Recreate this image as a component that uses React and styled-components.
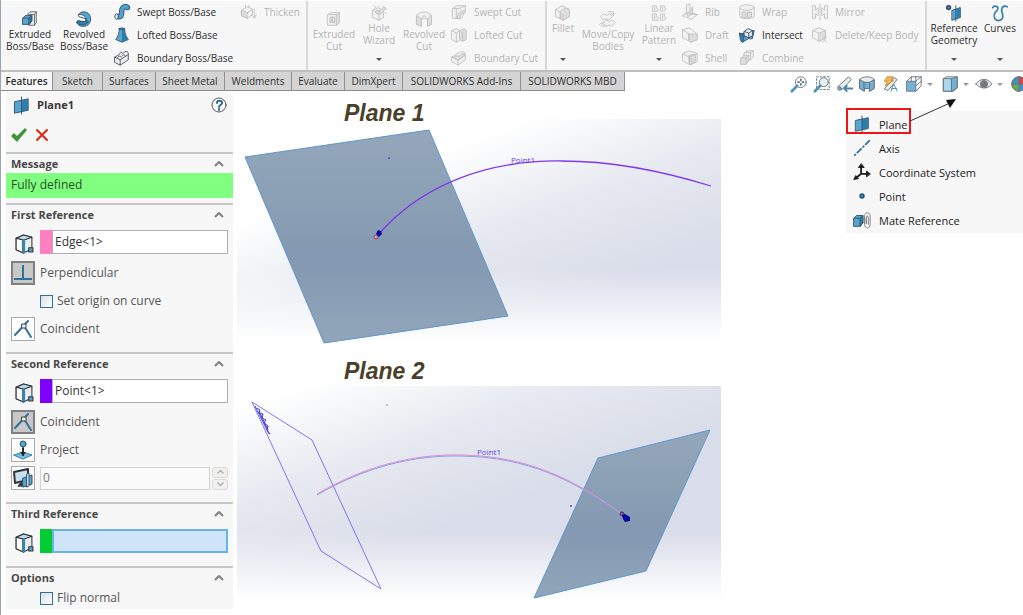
import React from 'react';
import styled, { createGlobalStyle, css } from 'styled-components';

const GlobalStyle = createGlobalStyle`
	* {
		box-sizing: border-box;
	}
	body {
		margin: 0;
		background: #fff;
		color: #2c2c2c;
		font-family: "Open Sans", "Noto Sans", sans-serif;
		font-size: 12px;
	}
	button, input {
		font: inherit;
		color: inherit;
	}
`;

const Page = styled.div`
	min-height: 100vh;
	border-left: 1px solid #9aa3b2;
	overflow: hidden;
`;

/* ---------- icons ---------- */

const Glyph = styled.svg`
	display: block;
	flex: none;
	width: ${p => p.$w || 18}px;
	height: ${p => p.$h || 18}px;
	fill: none;
	stroke: var(--line, #34506a);
	stroke-width: 1;
	stroke-linejoin: round;
	stroke-linecap: round;
	.f { fill: var(--fill, #55a5d0); }
	.d { fill: var(--dark, #2f7eaa); }
	.l { fill: var(--light, #e9edf0); }
`;

const shapes = {
	extrude: <>
		<path className="l" stroke="#666" d="M7 3l2-2h7v12l-2 3H8z" />
		<path className="l" stroke="#666" d="M14 4v12M14 4l2-3M8 4h6" />
		<path className="f" d="M1 8l3-3h7v6l-3 4H1z" />
		<path className="d" d="M8 8l3-3v6l-3 4z" />
		<path d="M1 8h7" />
	</>,
	revolve: <>
		<path className="f" d="M3 4C5 0 12 0 15 4c3 5 1 12-5 13-4 1-8-1-9-4l1-2 6 1c3 0 4-2 2-4z" />
		<path className="l" d="M3 4c3-1 7 1 9 5L5 7C3 7 2 5 3 4z" />
		<path className="d" d="M1 13l1-2 6 1c2 0 3-1 3-2l3 2c-2 4-10 5-13 1z" />
	</>,
	sweep: <>
		<path strokeWidth="6" d="M4 14c6 2 4-4 5-8 1-3 4-4 6-2" />
		<path style={{ stroke: 'var(--fill, #4fa3d0)' }} strokeWidth="4" d="M4 14c6 2 4-4 5-8 1-3 4-4 6-2" />
		<ellipse className="l" cx="3" cy="14" rx="2" ry="3" />
	</>,
	loft: <>
		<path className="f" d="M6 2l6 0c0 5 1 8 4 12l-7 3-7-3c3-4 4-7 4-12z" />
		<path className="d" stroke="none" d="M9 3l3-1c0 5 1 8 4 12l-7 3z" />
		<path className="f" d="M6 2l3-1 3 1-3 1z" />
	</>,
	boundary: <g stroke="#555">
		<path className="l" d="M1 8l5-3c1-3 3-3 4-1l2-2c2-1 4 0 4 2v7l-9 6-6-3z" />
		<path d="M1 8l6 3v6M7 11l9-6M4 9c0-2 3-3 4-1M9 7c1-2 3-2 4 0" />
	</g>,
	thicken: <>
		<path className="l" d="M1 7l6-4 6 3v6l-6 4-6-3z" />
		<path className="f" d="M1 7l6 3v6l-6-3z" />
		<path d="M7 10l6-4M15 6v9M12 12l3 4 2-4M5 4V1M9 4V2" />
	</>,
	cut: <>
		<path className="l" d="M2 4l3-2h10v11l-3 3H2z" />
		<path className="f" d="M12 4l3-2v11l-3 3z" />
		<path d="M2 4h10" /><path className="f" d="M5 7h5v6H5z" /><path d="M7 7v4H5M7 11l3 2" />
	</>,
	hole: <>
		<path className="l" d="M2 6l6-3 6 4v7l-5 3-7-3z" />
		<path d="M2 6l7 4v7M9 10l5-3" /><ellipse className="f" cx="8" cy="8" rx="3" ry="2" />
		<path className="f" d="M8 9l6-7 3 2-6 6zM4 1l1 2M16 8l1 2M9 1v1" />
	</>,
	revcut: <>
		<path className="l" d="M1 5c2-5 14-5 16 0v10l-4 2v-7c-1-2-6-2-7 0v7l-5-2z" />
		<path className="f" d="M1 5l5 4v8l-5-2zM17 5l-4 4v8l4-2z" /><path d="M6 9l3-4 4 4" />
	</>,
	sweepcut: <>
		<path className="l" d="M2 5l4-3h10v4l-4 10H2z" /><path d="M2 5h8l6-3M6 5v11" />
		<path className="f" d="M7 16c0-5 3-8 9-9v3c-4 0-6 2-6 6z" />
	</>,
	loftcut: <>
		<path className="l" d="M1 4l5-2 4 2v11l-4 2-5-3z" /><path className="f" d="M10 4l5-2 2 2v10l-4 2-3-2z" />
		<path d="M1 4l5 3v10M6 7l4-3M13 6v10" />
	</>,
	boundcut: <>
		<path className="l" d="M1 8l8-5c3-2 7-1 7 2v6l-8 6-7-4z" />
		<path className="f" d="M3 8c3-3 5 0 7-2 2-2 4-2 6-1l-8 6z" /><path d="M1 8l7 4v5M8 12l8-6" />
	</>,
	fillet: <>
		<path className="l" d="M1 5l7-4 8 4v8l-7 4-8-4z" /><path className="f" d="M6 8c1-3 5-5 10-3v8l-7 4-3-2z" />
		<path d="M1 5l5 3v7M9 11v6" />
	</>,
	move: <>
		<path className="l" d="M1 6l3-3 4 2 3-2 3 3-4 4-4-1-2 1z" />
		<path className="l" d="M4 13l3-3 4 2 3-2 3 3-4 4-4-1-2 1z" />
		<path d="M9 1h6v4M13 3l2 2 2-2M7 17H2v-4M0 15l2-2 2 2" />
	</>,
	pattern: <>
		<path className="l" d="M2 1h4v3l2 1v2H2zM11 1h4v2l2 1-2 3h-4zM2 10h4v3l2 1v3H2zM11 10h4v3l2 1-2 3h-4z" />
		<path className="f" d="M4 3v2M13 3v2M4 12v3M13 12v3" />
	</>,
	rib: <>
		<path className="l" d="M1 13l4-3V1l4-1v9l8 3-6 5z" /><path className="f" d="M5 10l4-1 3-6v8l-5 3z" /><path d="M1 13l4-3 12 2" />
	</>,
	draft: <>
		<path className="l" d="M1 3l8-2 8 7v6l-7 3-9-5z" /><path className="f" d="M8 8l9 0v6l-7 3-2-2z" /><path d="M1 3l7 5v7" />
	</>,
	shell: <>
		<path className="l" d="M1 4l7-3 9 3v9l-8 4-8-5z" /><path className="f" d="M8 6l7-1v8l-6 3z" /><path d="M1 4l7 4v8M8 8l9-4M10 9v4l4 1" />
	</>,
	wrap: <>
		<path className="l" d="M1 4v10c2 3 14 3 16 0V4z" /><ellipse className="l" cx="9" cy="4" rx="8" ry="3" />
		<path className="f" d="M4 9h4v6H4zM10 9h4v6h-4z" />
	</>,
	intersect: <>
		<path className="f" d="M1 7c4 2 5-2 8-1l8-2-2 9c-3 1-4-1-6 1l-5 3z" />
		<path className="l" d="M6 5l4-3 5 2v6l-4 2-5-2z" /><path d="M6 5l5 2v5M11 7l4-3" /><path className="d" d="M1 7l5 2-1 5-1 3-2-2z" />
	</>,
	combine: <>
		<path className="l" d="M6 3l3-2h7v7l-3 3H6z" /><path className="f" d="M2 9l3-3h6v6l-3 4H2z" /><path d="M2 9h6v7M8 9l3-3M6 3h7v8M13 3l3-2" />
	</>,
	mirror: <>
		<path className="l" d="M1 2h3v5l3-3v9L4 11v5H1zM17 2h-3v5l-3-3v9l3-2v5h3z" /><path d="M9 0v18" strokeDasharray="3 1" />
	</>,
	del: <>
		<path className="l" d="M1 4l7-3 7 3v8l-7 4-7-4z" /><path className="f" d="M8 7l7-3v8l-7 4z" /><path d="M1 4l7 3M12 12l4 5M16 12l-4 5" />
	</>,
	refgeo: <>
		<circle className="f" cx="3" cy="3" r="2" strokeWidth="2" />
		<path className="f" d="M7 6l9-3v11l-9 3z" /><path className="d" d="M12 4l4-1v11l-4 1z" stroke="none" /><path d="M11 1v17" strokeDasharray="3 1" />
	</>,
	curves: <path style={{ stroke: '#3c82ad' }} strokeWidth="2" d="M1 3c1-2 3-2 5-1 2 2 0 4-2 6-2 3-2 7 1 9 3 1 6 0 7-3 1-4-2-6-1-10 1-3 4-3 6-2" />,
	plane: <>
		<path className="f" d="M2 5l14-3v12L2 17z" /><path className="d" d="M9 4l7-2v12l-7 1z" stroke="none" /><path d="M9 0v18" strokeDasharray="4 1" />
	</>,
	axis: <path style={{ stroke: '#2b759f' }} strokeWidth="2" strokeDasharray="1 3 6 3" d="M1 17L17 1" />,
	coord: <>
		<path stroke="#1d1d1d" strokeWidth="2" d="M8 11V3M8 11h7M8 11l-6 5" />
		<path fill="#1d1d1d" stroke="#1d1d1d" d="M8 0L5 4h6zM18 11l-4-3v6zM0 17l2-4 3 3z" />
	</>,
	point: <circle className="f" cx="9" cy="9" r="2" strokeWidth="2" stroke="#23567a" />,
	mate: <>
		<path className="f" d="M0 7l3-3h7v8l-3 4H0z" /><path className="d" d="M7 7l3-3v8l-3 4z" /><path d="M0 7h7" />
		<path stroke="#777" d="M12 13V4c0-4 6-4 6 0v10c0 5-6 5-6 0V6M14 13V6c0-2 2-2 2 0v8" />
	</>,
	face: <g stroke="#333">
		<path className="l" d="M2 4l7-3 8 2v11l-8 4-7-3z" />
		<path fill="#b7dcf0" d="M2 4l7-3 8 2-8 3z" />
		<path fill="#fff" d="M2 4l7 2v12l-7-3z" /><path d="M9 7v10" strokeWidth="3" stroke="#3a82aa" />
		<path className="f" d="M14 13h4v4h-4z" />
	</g>,
	perp: <path stroke="#2f719b" strokeWidth="2" strokeLinecap="butt" d="M9 1v14M0 15h18" />,
	coin: <>
		<path stroke="#2f719b" strokeWidth="2" d="M1 15L14 1M10 6l7 11" /><path className="l" stroke="#444" d="M8 4h4v4H8z" />
	</>,
	project: <>
		<path d="M0 14l9-3 9 3-9 4z" fill="#79bbdd" stroke="#3a82aa" /><path stroke="#222" strokeWidth="2" strokeDasharray="2 1" d="M9 7v7" />
		<path fill="#222" stroke="none" d="M6 11h6l-3 4z" /><circle className="f" cx="9" cy="3" r="3" />
	</>,
	monitor: <>
		<path stroke="#333" d="M0 3l14-3v11L1 14z" fill="#c5e2f2" strokeWidth="2" /><path fill="#333" d="M4 17l3-4 4 4z" />
		<path className="f" d="M9 9l9-3v9l-9 3z" /><path className="l" d="M13 5l2-1v13l-2 1z" />
	</>,
};

const Icon = ({ name, w, h }) => (
	<Glyph viewBox="-1 -1 20 20" $w={w} $h={h} aria-hidden="true">{shapes[name]}</Glyph>
);

/* ---------- ribbon ---------- */

const Ribbon = styled.header`
	display: flex;
	height: 72px;
	background: #f7f7f7;
	border-top: 1px solid #fff;
	border-bottom: 2px solid #bfbfbf;
	font-size: 10px;
	line-height: 12px;
	overflow: hidden;
`;

const Group = styled.div`
	display: flex;
	flex: none;
	width: ${p => p.$w}px;
	border-right: 2px solid #d8d8d8;
	&:last-child {
		flex: 1 0 auto;
		border: 0;
	}
`;

const disabledLook = css`
	color: #b4b4b4;
	--line: #c2c2c2;
	--fill: #dedede;
	--dark: #cfcfcf;
	--light: #f1f1f1;
`;

const plainButton = css`
	border: 0;
	padding: 0;
	background: none;
	${p => p.disabled && disabledLook}
`;

const BigTool = styled.button`
	${plainButton}
	display: flex;
	flex-direction: column;
	align-items: center;
	flex: none;
	width: ${p => p.$w}px;
	height: 63px;
	padding-top: ${p => p.$low ? 9 : 3}px;
	white-space: pre;
`;

const Caret = styled.span`
	width: 0;
	height: 0;
	margin: ${p => p.$flat ? '0' : 'auto 0 3px'};
	border: 3px solid transparent;
	border-top-color: ${p => p.$flat ? '#999' : '#555'};
	border-bottom: 0;
	flex: none;
`;

const ToolList = styled.div`
	display: grid;
	grid-auto-rows: 23px;
	align-content: start;
	flex: none;
	width: ${p => p.$w}px;
	margin-left: ${p => p.$gap || 0}px;
`;

const SmallTool = styled.button`
	${plainButton}
	display: flex;
	align-items: center;
	gap: 6px;
	height: 22px;
	white-space: nowrap;
`;

const Big = ({ icon, label, w, low, caret, off }) => (
	<BigTool $w={w} $low={low} disabled={off}>
		<Icon name={icon} />
		<span>{label}</span>
		{caret && <Caret />}
	</BigTool>
);

const List = ({ items, w, gap }) => (
	<ToolList $w={w} $gap={gap}>
		{items.map(([icon, label, on]) => (
			<SmallTool key={label} disabled={!on}>
				<Icon name={icon} />
				{label}
			</SmallTool>
		))}
	</ToolList>
);

const RibbonBar = () => (
	<Ribbon>
		<Group $w={307}>
			<Big icon="extrude" label={'Extruded\nBoss/Base'} w={58} low />
			<Big icon="revolve" label={'Revolved\nBoss/Base'} w={50} low />
			<List w={127} gap={4} items={[
				['sweep', 'Swept Boss/Base', true],
				['loft', 'Lofted Boss/Base', true],
				['boundary', 'Boundary Boss/Base', true],
			]} />
			<List w={64} items={[['thicken', 'Thicken']]} />
		</Group>
		<Group $w={239}>
			<Big icon="cut" label={'Extruded\nCut'} w={52} low off />
			<Big icon="hole" label={'Hole\nWizard'} w={38} caret off />
			<Big icon="revcut" label={'Revolved\nCut'} w={52} low off />
			<List w={92} items={[
				['sweepcut', 'Swept Cut'],
				['loftcut', 'Lofted Cut'],
				['boundcut', 'Boundary Cut'],
			]} />
		</Group>
		<Group $w={380}>
			<Big icon="fillet" label="Fillet" w={32} caret off />
			<Big icon="move" label={'Move/Copy\nBodies'} w={58} low off />
			<Big icon="pattern" label={'Linear\nPattern'} w={44} caret off />
			<List w={57} items={[['rib', 'Rib'], ['draft', 'Draft'], ['shell', 'Shell']]} />
			<List w={73} items={[['wrap', 'Wrap'], ['intersect', 'Intersect', true], ['combine', 'Combine']]} />
			<List w={108} items={[['mirror', 'Mirror'], ['del', 'Delete/Keep Body']]} />
		</Group>
		<Group>
			<Big icon="refgeo" label={'Reference\nGeometry'} w={54} caret />
			<Big icon="curves" label="Curves" w={38} caret />
		</Group>
	</Ribbon>
);

/* ---------- tabs and view toolbar ---------- */

const TabRow = styled.div`
	display: flex;
	justify-content: space-between;
	height: 19px;
`;

const Tabs = styled.div`
	display: flex;
	flex: none;
	border-bottom: 1px solid #8c8c8c;
	font-size: 10px;
`;

const Tab = styled.button`
	width: ${p => p.$w}px;
	padding: 0;
	border: 0;
	border-right: 1px solid #909090;
	background: ${p => p.$active ? '#f7f7f7' : '#d4d4d4'};
	color: #303030;
	font-weight: ${p => p.$active ? 600 : 400};
	line-height: 18px;
	white-space: nowrap;
`;

const tabs = [
	['Features', 52], ['Sketch', 50], ['Surfaces', 53], ['Sheet Metal', 69], ['Weldments', 67],
	['Evaluate', 53], ['DimXpert', 58], ['SOLIDWORKS Add-Ins', 118], ['SOLIDWORKS MBD', 104],
];

const ViewTools = styled.div`
	display: flex;
	align-items: center;
	flex: none;
	height: 24px;
`;

const ViewButton = styled.button`
	${plainButton}
	display: flex;
	align-items: center;
	gap: 4px;
	flex: none;
	width: ${p => p.$w}px;
	--line: #64717c;
	--fill: #73b1d5;
`;

const viewTools = [
	['Zoom to fit', 23, <>
		<circle cx="11" cy="7" r="6" fill="#fff" /><path d="M7 11l-6 6" strokeWidth="3" stroke="#5490b5" />
		<path d="M11 4v1M11 9v1M8 7h1M13 7h1" strokeWidth="2" />
	</>],
	['Zoom to area', 23, <>
		<path d="M3 1h14v14H3z" strokeDasharray="2 2" /><circle cx="11" cy="7" r="5" fill="#e6f0f6" /><path d="M7 11l-6 6" strokeWidth="3" stroke="#5490b5" />
	</>],
	['Previous view', 22, <>
		<path className="l" d="M1 12L13 1l3 3L6 15z" /><circle className="f" cx="3" cy="14" r="2" /><path d="M8 14h9M11 11l-3 3 3 3" stroke="#4784aa" strokeWidth="2" />
	</>],
	['Section view', 23, <>
		<path className="l" d="M1 4c3-4 13-4 16 0v10l-5 3V8H6v9l-5-3z" />
		<path className="f" d="M1 4l5 3v10l-5-3zM12 7l5-3v10l-5 3z" /><path className="f" d="M6 7h6v7H6z" />
	</>],
	['Annotation views', 24, <>
		<path d="M3 14L14 2l3 2L7 16z" className="l" /><path d="M6 1h7l-3 4h3l-9 6 2-5H3z" fill="#f5b750" stroke="#c48d37" />
		<path d="M10 17l3-8 4 8M11 14h5" stroke="#4784aa" />
	</>],
	['View orientation', 36, <>
		<path className="f" d="M1 6h10v11H1z" /><path d="M1 6l5-5h11v10l-6 6M11 6l6-5M6 1v5M11 1v5M11 11l6-5" />
	</>, true],
	['Display style', 34, <>
		<path className="l" d="M2 3l3-2h12v12l-4 4H2z" /><path fill="#a9d7ee" d="M2 3h9v14H2z" /><path className="f" d="M11 3l6-2v12l-6 4z" />
	</>, true],
	['Hide/show items', 35, <>
		<path fill="#eee" d="M0 9c5-7 13-7 18 0-5 6-13 6-18 0z" /><circle cx="9" cy="9" r="4" fill="#777" stroke="#777" /><circle cx="8" cy="8" r="1" fill="#fff" />
	</>, true],
	['Edit appearance', 13, <>
		<circle cx="9" cy="9" r="8" fill="#3c8fd0" /><path d="M9 9V1A8 8 0 0 0 1 9z" fill="#4490cc" /><path d="M9 9V1a8 8 0 0 1 8 8z" fill="#d9463e" />
		<path d="M9 17V9H1a8 8 0 0 0 8 8z" fill="#62b14c" />
	</>],
];

/* ---------- property panel ---------- */

const Workspace = styled.main`
	display: grid;
	grid-template-columns: 227px minmax(0, 1fr) 177px;
	align-items: start;
	padding: 1px 0 6px 5px;
`;

const Panel = styled.form`
	background: #f7f7f7;
	color: #555;
	line-height: 16px;
`;

const PanelTitle = styled.div`
	display: flex;
	align-items: center;
	gap: 6px;
	height: 26px;
	padding: 0 6px 0 6px;
	color: #383838;
	h1 {
		flex: 1;
		margin: 0;
		font-size: 11px;
		font-weight: 700;
	}
`;

const HeadButton = styled.button`
	${plainButton}
	display: block;
`;

const Actions = styled.div`
	display: flex;
	gap: 8px;
	height: 34px;
	padding: 10px 5px;
`;

const Section = styled.section`
	border-top: 2px solid #c6c6c6;
	padding-bottom: ${p => p.$pad}px;
`;

const SectionHead = styled.h2`
	display: flex;
	align-items: center;
	justify-content: space-between;
	height: 19px;
	margin: 0 0 ${p => p.$flush ? 0 : 6}px;
	padding: 0 8px 0 5px;
	color: #484848;
	font-size: 11px;
	font-weight: 700;
`;

const Status = styled.p`
	margin: 0;
	padding: 4px 5px 5px;
	background: #80ff80;
	color: #285028;
`;

const Rows = styled.div`
	display: grid;
	gap: 4px;
`;

const Row = styled.div`
	display: flex;
	align-items: center;
	gap: 5px;
	height: 24px;
	padding: 0 5px;
	&:first-child {
		margin-bottom: 3px;
	}
`;

const Slot = styled.span`
	display: flex;
	justify-content: center;
	flex: none;
	width: 24px;
	padding-top: 3px;
`;

const Swatch = styled.span`
	flex: none;
	align-self: stretch;
	width: 12px;
	margin-right: -5px;
	background: ${p => p.$color};
`;

const Field = styled.input`
	flex: 1;
	min-width: 0;
	height: 24px;
	padding: 0 2px 2px;
	border: 1px solid #aab0b6;
	outline: 0;
	background: #fff;
	color: #333;
	${p => p.$active && css`
		border: 2px solid #66b5e6;
		background: #cfe4f8;
	`}
	${p => p.$muted && css`
		height: 23px;
		border-color: #d3d3d3;
		background: #fafafa;
		color: #777;
	`}
`;

const Toggle = styled.button`
	display: flex;
	align-items: center;
	justify-content: center;
	flex: none;
	width: 24px;
	height: 24px;
	padding: 0;
	border: ${p => p.$on ? '2px solid #808080' : '1px solid #aaa'};
	background: ${p => p.$on ? '#c8c8c8' : '#fdfdfd'};
`;

const CheckRow = styled.label`
	display: flex;
	align-items: center;
	gap: 4px;
	height: ${p => p.$h}px;
	padding-left: 34px;
`;

const Check = styled.input`
	appearance: none;
	width: 13px;
	height: 13px;
	margin: 0;
	border: 1px solid #2f6f98;
	background: linear-gradient(135deg, #d9dfe4, #fff);
	&:checked {
		background: #2f6f98;
	}
`;

const Spinner = styled.span`
	display: grid;
	gap: 1px;
	flex: none;
	width: 16px;
	margin-left: -3px;
	button {
		display: flex;
		align-items: center;
		justify-content: center;
		height: 11px;
		padding: 0;
		border: 1px solid #dcdad4;
		border-radius: 3px;
		background: #f0f0f0;
		--line: #b0b0b0;
	}
`;

const Chevron = ({ down, w = 12, h = 8 }) => (
	<Glyph viewBox="0 0 12 8" $w={w} $h={h} style={{ stroke: 'var(--line, #808080)' }}>
		<path strokeWidth="2" strokeLinecap="butt" d={down ? 'M2 2l4 4 4-4' : 'M2 6l4-4 4 4'} />
	</Glyph>
);

const Head = ({ children, flush }) => (
	<SectionHead $flush={flush}>
		{children}
		<HeadButton type="button" aria-label={`Collapse ${children}`}><Chevron /></HeadButton>
	</SectionHead>
);

const Collector = ({ label, value = '', color, active }) => (
	<Row>
		<Slot><Icon name="face" w={21} h={21} /></Slot>
		<Swatch $color={color} />
		<Field aria-label={label} defaultValue={value} $active={active} />
	</Row>
);

const Relation = ({ icon, id, children, on }) => (
	<Row>
		<Toggle type="button" id={id} aria-pressed={!!on} aria-label={children} $on={on}><Icon name={icon} w={20} h={20} /></Toggle>
		<label htmlFor={id}>{children}</label>
	</Row>
);

const PropertyPanel = () => (
	<Panel>
		<PanelTitle>
			<Icon name="plane" w={19} h={19} />
			<h1>Plane1</h1>
			<HeadButton type="button" aria-label="Help">
				<Glyph viewBox="0 0 16 16" $w={16} $h={16}>
					<circle cx="8" cy="8" r="7" fill="#fff" stroke="#555" />
					<path stroke="#2b6c97" strokeWidth="2" d="M6 6c0-3 5-3 5 0 0 2-3 2-3 4M8 12v1" />
				</Glyph>
			</HeadButton>
		</PanelTitle>
		<Actions>
			<HeadButton type="button" aria-label="OK">
				<Glyph viewBox="0 0 16 14" $w={16} $h={14} style={{ stroke: 'none' }}>
					<path fill="#3f9638" d="M0 8l3-3 3 3 8-8 2 2L6 14z" />
				</Glyph>
			</HeadButton>
			<HeadButton type="button" aria-label="Cancel">
				<Glyph viewBox="0 0 14 14" $w={14} $h={14}>
					<path stroke="#e02514" strokeWidth="2" d="M2 2l10 10M12 2L2 12" />
				</Glyph>
			</HeadButton>
		</Actions>
		<Section $pad={5}>
			<Head flush>Message</Head>
			<Status>Fully defined</Status>
		</Section>
		<Section $pad={11}>
			<Head>First Reference</Head>
			<Rows>
				<Collector label="First reference" value="Edge<1>" color="#ff80c0" />
				<Relation icon="perp" id="perp" on>Perpendicular</Relation>
				<CheckRow $h={24}><Check type="checkbox" />Set origin on curve</CheckRow>
				<Relation icon="coin" id="coin1">Coincident</Relation>
			</Rows>
		</Section>
		<Section $pad={12}>
			<Head>Second Reference</Head>
			<Rows>
				<Collector label="Second reference" value="Point<1>" color="#8000ff" />
				<Relation icon="coin" id="coin2" on>Coincident</Relation>
				<Relation icon="project" id="proj">Project</Relation>
				<Row>
					<Toggle type="button" aria-label="Parallel to screen"><Icon name="monitor" w={20} h={20} /></Toggle>
					<Field aria-label="Offset" defaultValue="0" $muted />
					<Spinner>
						<button type="button" aria-label="Increase"><Chevron w={9} h={6} /></button>
						<button type="button" aria-label="Decrease"><Chevron down w={9} h={6} /></button>
					</Spinner>
				</Row>
			</Rows>
		</Section>
		<Section $pad={13}>
			<Head>Third Reference</Head>
			<Collector label="Third reference" color="#00cc33" active />
		</Section>
		<Section $pad={0}>
			<Head flush>Options</Head>
			<CheckRow $h={22}><Check type="checkbox" />Flip normal</CheckRow>
		</Section>
	</Panel>
);

/* ---------- graphics area ---------- */

const Views = styled.div`
	padding: 0 125px 0 4px;
`;

const ViewTitle = styled.h2`
	position: relative;
	z-index: 1;
	height: ${p => p.$h}px;
	margin: 0;
	padding: 8px 0 0 107px;
	color: #4a4029;
	font: italic bold 23px/26px "Liberation Sans", Arial, sans-serif;
	white-space: nowrap;
`;

const Scene = styled.svg`
	display: block;
	width: 100%;
	height: auto;
	background:
		linear-gradient(to bottom, rgba(255, 255, 255, 0) 65%, #fff 96%),
		linear-gradient(160deg, #fff ${p => p.$start}%, #e6e9f0 ${p => p.$start + 24}%, #d9dde9 ${p => p.$start + 48}%);
	text {
		font: 8px "Open Sans", sans-serif;
		fill: #5b45e8;
	}
`;

const Shade = ({ id }) => (
	<linearGradient id={id} x1="0" y1="0" x2="0" y2="1">
		<stop offset="0" stopColor="#94a7ba" />
		<stop offset="0.6" stopColor="#8499b1" />
		<stop offset="1" stopColor="#91a5ba" />
	</linearGradient>
);

const SceneOne = () => (
	<Scene viewBox="0 0 484 231" $start={26} fill="none" role="img" aria-label="Plane at the start of the curve">
		<defs><Shade id="shade1" /></defs>
		<path d="M8 38L192 11l79 186L87 224z" fill="url(#shade1)" stroke="#5d97cf" />
		<circle cx="152" cy="39" r="1" fill="#5548e0" />
		<path d="M141 116C184 66 250 41 325 42c58 0 110 13 149 25" stroke="#8038f0" strokeWidth="1.3" />
		<circle cx="139" cy="118" r="2" stroke="#8a4a6a" fill="#d8a0b0" />
		<path d="M139 115l2-4 3 1 1 3-3 3z" fill="#0a0aa0" />
		<text x="274" y="44">Point1</text>
	</Scene>
);

const SceneTwo = () => (
	<Scene viewBox="0 0 484 223" $start={6} fill="none" role="img" aria-label="Plane at the end of the curve">
		<defs><Shade id="shade2" /></defs>
		<path d="M15 16l60 38 69 149-60-38z" stroke="#7f74f2" />
		<path d="M18 20l14 28M20 22l3 2-1 3 4 1-1 4 4 2-2 3 4 3-1 4 3 4M22 25l9 19" stroke="#4038d8" />
		<path d="M361 72l112-28-64 141-112 27z" fill="url(#shade2)" stroke="#5d97cf" />
		<path d="M80 109c48-28 96-40 144-39 66 1 114 24 162 60" stroke="#8e9de8" />
		<path d="M80 108c48-28 96-40 144-39 66 1 114 24 162 60" stroke="#dc8fd0" />
		<circle cx="150" cy="19" r="1" fill="#8bc4ea" />
		<circle cx="334" cy="120" r="1" fill="#5548e0" />
		<circle cx="385" cy="128" r="2" fill="#8f56a0" stroke="#403060" />
		<path d="M385 129l3-1 5 3v4l-5 1-2-3z" fill="#0a0aa0" />
		<text x="240" y="69">Point1</text>
	</Scene>
);

/* ---------- reference geometry menu ---------- */

const Menu = styled.div`
	position: relative;
	margin-top: 19px;
	padding: 1px 0;
	background: #f7f7f7;
	font-size: 11px;
`;

const MenuItem = styled.button`
	${plainButton}
	display: flex;
	align-items: center;
	gap: 8px;
	width: 100%;
	height: 24px;
	padding-left: 7px;
	color: #222;
	white-space: nowrap;
`;

const Marker = styled.span`
	position: absolute;
	left: 0;
	top: -3px;
	width: 65px;
	height: 26px;
	border: 2px solid #f01414;
	pointer-events: none;
`;

const Arrow = styled.svg`
	position: absolute;
	left: 64px;
	top: -13px;
	width: 48px;
	height: 26px;
	pointer-events: none;
`;

const menu = [
	['plane', 'Plane'], ['axis', 'Axis'], ['coord', 'Coordinate System'], ['point', 'Point'], ['mate', 'Mate Reference'],
];

export default function App() {
	return (
		<Page>
			<GlobalStyle />
			<RibbonBar />
			<TabRow>
				<Tabs role="tablist">
					{tabs.map(([label, w], i) => (
						<Tab key={label} role="tab" aria-selected={i === 0} $active={i === 0} $w={w}>{label}</Tab>
					))}
				</Tabs>
				<ViewTools>
					{viewTools.map(([label, w, shape, caret]) => (
						<ViewButton key={label} $w={w} aria-label={label}>
							<Glyph viewBox="-1 -1 20 20" $w={18} $h={18}>{shape}</Glyph>
							{caret && <Caret $flat />}
						</ViewButton>
					))}
				</ViewTools>
			</TabRow>
			<Workspace>
				<PropertyPanel />
				<Views>
					<ViewTitle $h={27}>Plane 1</ViewTitle>
					<SceneOne />
					<ViewTitle $h={36}>Plane 2</ViewTitle>
					<SceneTwo />
				</Views>
				<Menu>
					{menu.map(([icon, label]) => (
						<MenuItem key={label}><Icon name={icon} />{label}</MenuItem>
					))}
					<Marker />
					<Arrow viewBox="0 0 48 26">
						<path d="M0 23L40 5" stroke="#333" />
						<path d="M46 1l-10 1 4 8z" fill="#111" />
					</Arrow>
				</Menu>
			</Workspace>
		</Page>
	);
}
